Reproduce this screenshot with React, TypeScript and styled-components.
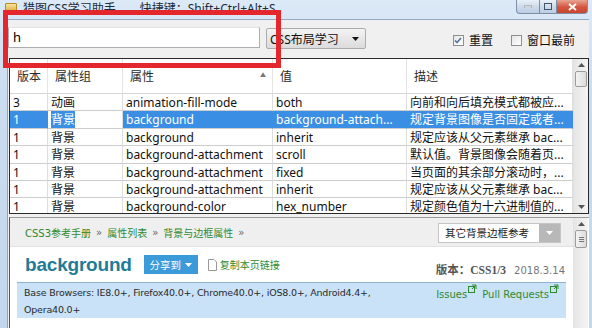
import React from 'react';
import styled, { createGlobalStyle } from 'styled-components';

const GlobalStyle = createGlobalStyle`
  html, body { margin: 0; padding: 0; }
  body {
    width: 592px;
    height: 328px;
    overflow: hidden;
    background: #c6daef;
    font-family: "Noto Sans", "Noto Sans CJK SC", sans-serif;
  }
`;

const Window = styled.div`
  position: relative;
  width: 592px;
  height: 328px;
  display: flex;
  flex-direction: column;
  background: linear-gradient(180deg, #dce9f7 0%, #cadcf0 30%, #c2d6ed 100%);
  overflow: hidden;
`;

const TitleBar = styled.div`
  height: 19px;
  flex: none;
  display: flex;
  align-items: flex-start;
  padding-left: 5px;
`;

const AppIcon = styled.div`
  width: 12px;
  height: 10px;
  margin-top: 3px;
  border-radius: 1px;
  background: linear-gradient(180deg, #f7e39a, #d9a93c);
  border: 1px solid #b88a2a;
  box-sizing: border-box;
`;

const TitleText = styled.div`
  margin-left: 6px;
  margin-top: 2px;
  font-size: 12px;
  line-height: 14px;
  color: #1e2a3a;
  white-space: nowrap;
  word-spacing: 2px;
`;

const Controls = styled.div`
  margin-left: auto;
  margin-right: 4px;
  display: flex;
  height: 14px;
`;

const CtrlButton = styled.div<{ $close?: boolean; $w: number }>`
  width: ${p => p.$w}px;
  height: 14px;
  box-sizing: border-box;
  border: 1px solid #7d8ea6;
  border-top: none;
  margin-left: -1px;
  display: flex;
  align-items: center;
  justify-content: center;
  border-radius: ${p => (p.$close ? '0 0 4px 0' : '0')};
  background: ${p =>
    p.$close
      ? 'linear-gradient(180deg, #e8a493 0%, #d4553f 55%, #c9452f 100%)'
      : 'linear-gradient(180deg, #e9f0f8 0%, #cbd9ea 55%, #bccde3 100%)'};
  &:first-child { border-radius: 0 0 0 4px; }
`;

const Client = styled.div`
  flex: 1;
  margin: 0 3px 0 7px;
  border-top: 1px solid #94a9c3;
  border-left: 1px solid #8fa3bc;
  background: #f0f0f0;
  display: flex;
  flex-direction: column;
  min-height: 0;
`;

const Toolbar = styled.div`
  height: 38px;
  flex: none;
  display: flex;
  align-items: flex-start;
  padding-top: 7px;
  box-sizing: border-box;
`;

const SearchInput = styled.div`
  width: 252px;
  height: 21px;
  box-sizing: border-box;
  background: #fff;
  border: 1px solid #abadb3;
  border-top-color: #e3e3e3;
  font-size: 13px;
  line-height: 19px;
  padding-left: 4px;
  color: #000;
`;

const Select = styled.div`
  margin-left: 6px;
  margin-top: 1px;
  width: 100px;
  height: 21px;
  box-sizing: border-box;
  border: 1px solid #acacac;
  border-radius: 2px;
  background: linear-gradient(180deg, #f4f4f4 0%, #e7e7e7 50%, #dcdcdc 100%);
  display: flex;
  align-items: center;
  padding: 0 6px 0 3px;
  font-size: 12px;
  color: #111;
  justify-content: space-between;
`;

const Check = styled.label`
  display: flex;
  align-items: center;
  margin-top: 4px;
  font-size: 12px;
  color: #111;
  gap: 5px;
  margin-right: 14px;
  &:first-of-type { margin-left: auto; margin-right: 18px; }
`;

const Box = styled.span`
  width: 11px;
  height: 11px;
  box-sizing: border-box;
  border: 1px solid #8e8f8f;
  background: linear-gradient(135deg, #e6e6e6, #ffffff);
  display: flex;
  align-items: center;
  justify-content: center;
`;

const Table = styled.div`
  margin-left: 1px;
  width: 580px;
  height: 156px;
  flex: none;
  box-sizing: border-box;
  border: 1px solid #2a2a2a;
  display: flex;
  background: #fff;
  overflow: hidden;
`;

const Grid = styled.div`
  width: 563px;
  display: grid;
  grid-template-columns: 38px 75px 150px 134px 166px;
  grid-auto-rows: 17.4px;
  grid-template-rows: 35px;
  align-content: start;
`;

const HeadCell = styled.div`
  display: flex;
  align-items: center;
  justify-content: space-between;
  padding: 0 6px 0 7px;
  font-size: 12px;
  color: #2b2b2b;
  border-right: 1px solid #e4e4e4;
  border-bottom: 1px solid #d6d6d6;
  background: #fff;
`;

const SortMark = styled.span`
  font-size: 6px;
  color: #777;
  margin-top: -4px;
`;

const Cell = styled.div<{ $sel?: boolean }>`
  padding: 0 3px;
  font-size: 12px;
  line-height: 18px;
  white-space: nowrap;
  overflow: hidden;
  color: ${p => (p.$sel ? '#fff' : '#111')};
  background: ${p => (p.$sel ? '#3a8fe4' : '#fff')};
  border-right: 1px solid ${p => (p.$sel ? '#3a8fe4' : '#dedede')};
  border-bottom: 1px solid #cdcdcd;
`;

const Mark = styled.span`
  background: #3a8fe4;
  color: #fff;
`;

const Scrollbar = styled.div`
  width: 15px;
  flex: none;
  display: flex;
  flex-direction: column;
  background: linear-gradient(90deg, #e6e6e6, #f4f4f4);
  border-left: 1px solid #e2e2e2;
  box-sizing: border-box;
`;

const ScrollBtn = styled.div`
  height: 12px;
  display: flex;
  align-items: center;
  justify-content: center;
`;

const Thumb = styled.div<{ $h: number }>`
  height: ${p => p.$h}px;
  margin: 0 1px;
  border: 1px solid #9c9c9c;
  border-radius: 2px;
  background: linear-gradient(90deg, #f3f3f3, #dcdcdc);
  display: flex;
  align-items: center;
  justify-content: center;
`;

const Track = styled.div`
  flex: 1;
`;

const DocPanel = styled.div`
  margin: 3px 0 0 1px;
  flex: 1;
  display: flex;
  border-left: 1px solid #555;
  border-top: 1px solid #9a9a9a;
  background: #fff;
  min-height: 0;
`;

const DocBody = styled.div`
  width: 563px;
  display: flex;
  flex-direction: column;
`;

const Crumbs = styled.div`
  height: 29px;
  flex: none;
  box-sizing: border-box;
  background: #efefef;
  border-bottom: 1px solid #e2e2e2;
  display: flex;
  align-items: center;
  padding: 1px 12px 0 15px;
  font-size: 10px;
  color: #2f8a2f;
  font-family: "DejaVu Sans", "Noto Sans CJK SC", sans-serif;
`;

const CrumbSep = styled.span`
  color: #666;
  margin: 0 5px;
`;

const DocSelect = styled.div`
  margin-left: auto;
  width: 123px;
  height: 20px;
  box-sizing: border-box;
  border: 1px solid #c6c6c6;
  background: #fff;
  display: flex;
  font-size: 10.5px;
  color: #222;
  font-family: "Noto Sans CJK SC", sans-serif;
`;

const DocSelectText = styled.span`
  flex: 1;
  padding-left: 6px;
  line-height: 18px;
`;

const DocSelectBtn = styled.span`
  width: 21px;
  background: #b8b8b8;
  display: flex;
  align-items: center;
  justify-content: center;
`;

const Heading = styled.div`
  height: 35px;
  flex: none;
  display: flex;
  align-items: center;
  padding: 0 8px 0 15px;
`;

const PropName = styled.h1`
  margin: 0;
  font-family: "Liberation Sans", Arial, sans-serif;
  font-weight: bold;
  font-size: 19px;
  color: #1f7c98;
  letter-spacing: -0.2px;
`;

const ShareButton = styled.div`
  margin-left: 12px;
  height: 19px;
  width: 54px;
  box-sizing: border-box;
  background: #3b9ad8;
  color: #fff;
  font-size: 10.5px;
  display: flex;
  align-items: center;
  justify-content: center;
  gap: 4px;
  font-family: "Noto Sans CJK SC", sans-serif;
`;

const CopyLink = styled.div`
  margin-left: 10px;
  display: flex;
  align-items: center;
  gap: 3px;
  font-size: 10px;
  color: #2f8a2f;
  font-family: "Noto Sans CJK SC", sans-serif;
`;

const Version = styled.div`
  margin-left: auto;
  margin-top: 8px;
  display: flex;
  align-items: baseline;
  gap: 8px;
  font-size: 11.5px;
`;

const VersionLabel = styled.span`
  font-family: "Liberation Serif", "Noto Sans CJK SC", serif;
  font-weight: bold;
  color: #555;
`;

const VersionDate = styled.span`
  font-family: "DejaVu Sans", sans-serif;
  font-size: 10px;
  color: #777;
`;

const InfoBox = styled.div`
  margin: 0 7px;
  height: 36px;
  flex: none;
  box-sizing: border-box;
  background: #c9e2f8;
  border-top: 1px solid #8fb2cf;
  display: flex;
  justify-content: space-between;
  padding: 1px 7px 0 7px;
  font-family: "DejaVu Sans", sans-serif;
  font-size: 9.5px;
  letter-spacing: -0.2px;
  line-height: 17px;
  color: #2a2a2a;
`;

const Links = styled.div`
  display: flex;
  gap: 5px;
  font-size: 10px;
  letter-spacing: 0;
  color: #2f8a2f;
  white-space: nowrap;
`;

const RedFrame = styled.div`
  position: absolute;
  left: 3px;
  top: 10px;
  width: 278px;
  height: 58px;
  box-sizing: border-box;
  border: 5px solid #e4272c;
  pointer-events: none;
`;

const Arrow = ({ dir, color = '#555' }: { dir: 'up' | 'down'; color?: string }) => (
  <svg width="7" height="4" viewBox="0 0 7 4">
    <path d={dir === 'up' ? 'M0 4 L3.5 0 L7 4 Z' : 'M0 0 L7 0 L3.5 4 Z'} fill={color} />
  </svg>
);

const ExtIcon = () => (
  <svg width="9" height="9" viewBox="0 0 9 9" style={{ marginLeft: 1, verticalAlign: 5 }}>
    <rect x="0.5" y="2.5" width="6" height="6" fill="none" stroke="#2f8a2f" />
    <path d="M4 1 H8 V5 M8 1 L4 5" fill="none" stroke="#2f8a2f" />
  </svg>
);

const rows = [
  ['3', '动画', 'animation-fill-mode', 'both', '向前和向后填充模式都被应...'],
  ['1', '背景', 'background', 'background-attach...', '规定背景图像是否固定或者...'],
  ['1', '背景', 'background', 'inherit', '规定应该从父元素继承 bac...'],
  ['1', '背景', 'background-attachment', 'scroll', '默认值。背景图像会随着页...'],
  ['1', '背景', 'background-attachment', 'fixed', '当页面的其余部分滚动时，...'],
  ['1', '背景', 'background-attachment', 'inherit', '规定应该从父元素继承 bac...'],
  ['1', '背景', 'background-color', 'hex_number', '规定颜色值为十六进制值的...'],
];

const App = () => {
  const selected = 1;
  return (
    <Window>
      <GlobalStyle />
      <TitleBar>
        <AppIcon />
        <TitleText>猎图CSS学习助手　　快捷键：Shift+Ctrl+Alt+S</TitleText>
        <Controls>
          <CtrlButton $w={24}>
            <svg width="8" height="3"><rect width="8" height="2" y="1" fill="#fff" stroke="#44546a" strokeWidth="0.5" /></svg>
          </CtrlButton>
          <CtrlButton $w={18}>
            <svg width="8" height="7"><rect x="0.5" y="0.5" width="7" height="6" fill="none" stroke="#44546a" /></svg>
          </CtrlButton>
          <CtrlButton $w={32} $close>
            <svg width="9" height="8"><path d="M1 1 L8 7 M8 1 L1 7" stroke="#fff" strokeWidth="2" /></svg>
          </CtrlButton>
        </Controls>
      </TitleBar>
      <Client>
        <Toolbar>
          <SearchInput>h</SearchInput>
          <Select>
            <span>CSS布局学习</span>
            <Arrow dir="down" color="#111" />
          </Select>
          <Check>
            <Box>
              <svg width="8" height="7"><path d="M1 3.5 L3 5.5 L7 1" fill="none" stroke="#4a6a9a" strokeWidth="1.5" /></svg>
            </Box>
            重置
          </Check>
          <Check>
            <Box />
            窗口最前
          </Check>
        </Toolbar>
        <Table>
          <Grid>
            <HeadCell>版本</HeadCell>
            <HeadCell>属性组</HeadCell>
            <HeadCell>属性<SortMark>▲</SortMark></HeadCell>
            <HeadCell>值</HeadCell>
            <HeadCell>描述</HeadCell>
            {rows.map((r, i) =>
              r.map((c, j) => {
                const sel = i === selected;
                if (sel && j === 1) {
                  return (
                    <Cell key={`${i}-${j}`}>
                      <Mark>{c}</Mark>
                    </Cell>
                  );
                }
                return (
                  <Cell key={`${i}-${j}`} $sel={sel}>
                    {c}
                  </Cell>
                );
              })
            )}
          </Grid>
          <Scrollbar>
            <ScrollBtn><Arrow dir="up" /></ScrollBtn>
            <Thumb $h={14} />
            <Track />
            <ScrollBtn><Arrow dir="down" /></ScrollBtn>
          </Scrollbar>
        </Table>
        <DocPanel>
          <DocBody>
            <Crumbs>
              CSS3参考手册<CrumbSep>»</CrumbSep>属性列表<CrumbSep>»</CrumbSep>背景与边框属性<CrumbSep>»</CrumbSep>
              <DocSelect>
                <DocSelectText>其它背景边框参考</DocSelectText>
                <DocSelectBtn><Arrow dir="down" color="#fff" /></DocSelectBtn>
              </DocSelect>
            </Crumbs>
            <Heading>
              <PropName>background</PropName>
              <ShareButton>分享到 <Arrow dir="down" color="#fff" /></ShareButton>
              <CopyLink>
                <svg width="9" height="12" viewBox="0 0 9 12">
                  <path d="M0.5 0.5 H6 L8.5 3 V11.5 H0.5 Z" fill="#fff" stroke="#999" />
                </svg>
                复制本页链接
              </CopyLink>
              <Version>
                <VersionLabel>版本：CSS1/3</VersionLabel>
                <VersionDate>2018.3.14</VersionDate>
              </Version>
            </Heading>
            <InfoBox>
              <div>
                Base Browsers: IE8.0+, Firefox40.0+, Chrome40.0+, iOS8.0+, Android4.4+,
                <br />
                Opera40.0+
              </div>
              <Links>
                <span>Issues<ExtIcon /></span>
                <span>Pull Requests<ExtIcon /></span>
              </Links>
            </InfoBox>
          </DocBody>
          <Scrollbar>
            <ScrollBtn><Arrow dir="up" /></ScrollBtn>
            <Thumb $h={16}>
              <svg width="5" height="5"><path d="M0 0.5 H5 M0 2.5 H5 M0 4.5 H5" stroke="#777" /></svg>
            </Thumb>
            <Track />
          </Scrollbar>
        </DocPanel>
      </Client>
      <RedFrame />
    </Window>
  );
};

export default App;
